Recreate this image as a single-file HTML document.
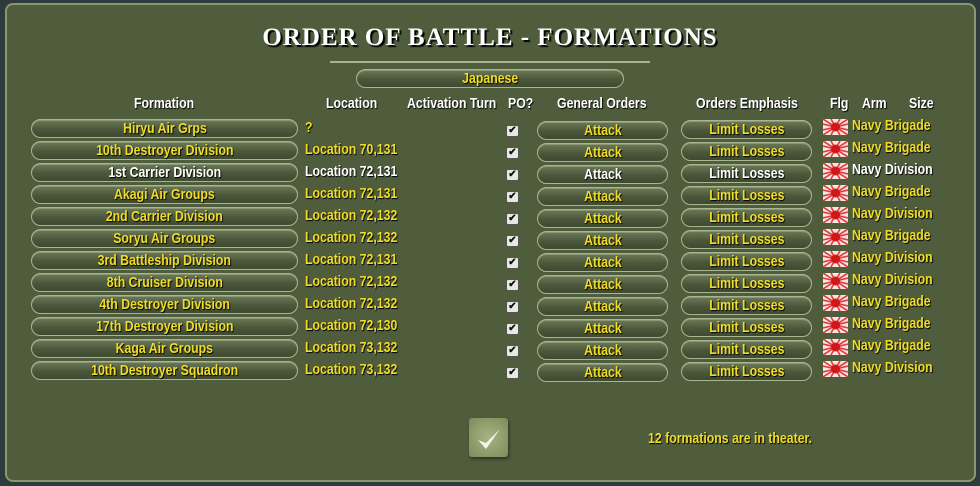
<!DOCTYPE html><html><head><meta charset="utf-8"><style>
*{margin:0;padding:0;box-sizing:border-box}
body{width:980px;height:486px;background:#2d3a3e;position:relative;overflow:hidden;font-family:"Liberation Sans",sans-serif;font-weight:bold}
#p{position:absolute;left:5px;top:3px;width:971px;height:479px;background:#505d3d;border:2px solid #8a9870;border-radius:8px}
.t{position:absolute;white-space:nowrap;font-size:15px;text-shadow:1px 1px 1px #000;transform:scaleX(.82);transform-origin:0 0}
.y{color:#f0dc28}.w{color:#fff}
.h{color:#fff}
.b{position:absolute;height:19px;border-radius:10px;background:linear-gradient(#6c7a58,#4a573a 55%,#3f4b31);border:1px solid #a9b590;box-shadow:inset 0 1px 0 #8b9873;text-align:center;line-height:17px;font-size:15px;text-shadow:1px 1px 1px #000;white-space:nowrap}
.b span{display:inline-block;transform:scaleX(.82)}
.cb{position:absolute;width:13px;height:12px;background:#e8e8e2;border:1px solid #555;border-radius:2px;font-size:10px;line-height:10px;text-align:center;color:#111}
.f{position:absolute;width:25px;height:16px}
</style></head><body>
<div id="p"></div>
<div class="t" style="left:0;width:980px;text-align:center;top:24px;font-family:'Liberation Serif',serif;font-size:25px;color:#fff;letter-spacing:1px;text-shadow:2px 2px 1px #000;transform:none">ORDER OF BATTLE - FORMATIONS</div>
<div style="position:absolute;left:330px;top:61px;width:320px;height:2px;background:#a9b590"></div>
<div class="b y" style="left:356px;top:69px;width:268px"><span>Japanese</span></div>
<div class="t h" style="left:134px;top:95px">Formation</div>
<div class="t h" style="left:326px;top:95px">Location</div>
<div class="t h" style="left:407px;top:95px">Activation Turn</div>
<div class="t h" style="left:508px;top:95px">PO?</div>
<div class="t h" style="left:557px;top:95px">General Orders</div>
<div class="t h" style="left:696px;top:95px">Orders Emphasis</div>
<div class="t h" style="left:830px;top:95px">Flg</div>
<div class="t h" style="left:862px;top:95px">Arm</div>
<div class="t h" style="left:909px;top:95px">Size</div>
<svg width="0" height="0" style="position:absolute"><defs><g id="fl"><rect width="25" height="16" fill="#f6e4e4"/><g stroke="#e03a3a" stroke-width="1.6"><line x1="12.5" y1="8" x2="0" y2="0"/><line x1="12.5" y1="8" x2="8" y2="0"/><line x1="12.5" y1="8" x2="17" y2="0"/><line x1="12.5" y1="8" x2="25" y2="0"/><line x1="12.5" y1="8" x2="0" y2="16"/><line x1="12.5" y1="8" x2="8" y2="16"/><line x1="12.5" y1="8" x2="17" y2="16"/><line x1="12.5" y1="8" x2="25" y2="16"/><line x1="12.5" y1="8" x2="0" y2="5"/><line x1="12.5" y1="8" x2="0" y2="11"/><line x1="12.5" y1="8" x2="25" y2="5"/><line x1="12.5" y1="8" x2="25" y2="11"/></g><circle cx="12.5" cy="8" r="4.5" fill="#d01818"/></g></defs></svg>
<div id="rows"></div>
<script>
var d=[["Hiryu Air Grps","?","Brigade"],["10th Destroyer Division","Location 70,131","Brigade"],["1st Carrier Division","Location 72,131","Division",1],["Akagi Air Groups","Location 72,131","Brigade"],["2nd Carrier Division","Location 72,132","Division"],["Soryu Air Groups","Location 72,132","Brigade"],["3rd Battleship Division","Location 72,131","Division"],["8th Cruiser Division","Location 72,132","Division"],["4th Destroyer Division","Location 72,132","Brigade"],["17th Destroyer Division","Location 72,130","Brigade"],["Kaga Air Groups","Location 73,132","Brigade"],["10th Destroyer Squadron","Location 73,132","Division"]];
var h="";d.forEach(function(r,i){var y=119+i*22,c=r[3]?"w":"y";
h+='<div class="b '+c+'" style="left:31px;top:'+y+'px;width:267px"><span>'+r[0]+'</span></div>';
h+='<div class="t '+c+'" style="left:305px;top:'+y+'px">'+r[1]+'</div>';
h+='<div class="cb" style="left:506px;top:'+(y+6)+'px">✔</div>';
h+='<div class="b '+c+'" style="left:537px;top:'+(y+2)+'px;width:131px"><span>Attack</span></div>';
h+='<div class="b '+c+'" style="left:681px;top:'+(y+1)+'px;width:131px"><span>Limit Losses</span></div>';
h+='<svg class="f" style="left:823px;top:'+(y)+'px"><use href="#fl"/></svg>';
h+='<div class="t '+c+'" style="left:852px;top:'+(y-2)+'px">Navy '+r[2]+'</div>';});
document.getElementById("rows").innerHTML=h;
</script>
<div style="position:absolute;left:469px;top:418px;width:39px;height:39px;border-radius:3px;background:radial-gradient(#a8b483,#7d8a5a);box-shadow:1px 2px 3px #2a3320"></div>
<svg style="position:absolute;left:469px;top:418px" width="39" height="39"><path d="M9 22 L17 31 L31 11 L17 25 Z" fill="#f4f6ea"/></svg>
<div class="t y" style="left:648px;top:430px">12 formations are in theater.</div>
</body></html>
